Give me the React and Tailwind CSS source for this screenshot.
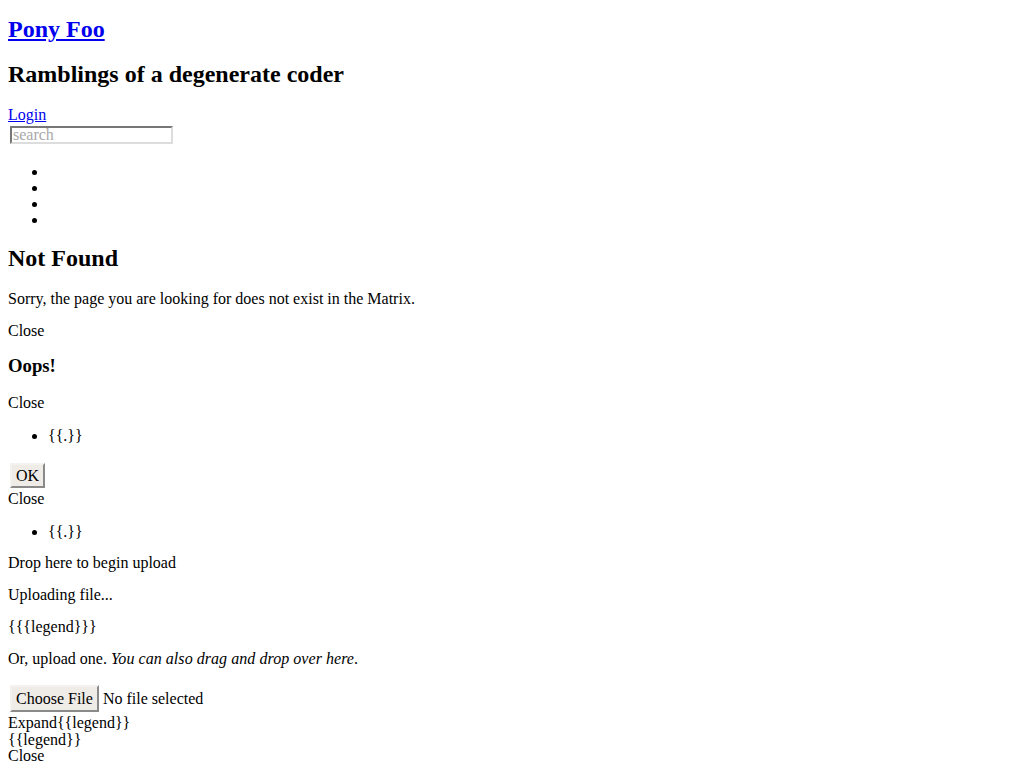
export default function App() {
  const text = "text-[16px] leading-[16px] h-[16px] whitespace-nowrap";
  const link = "text-[#0000ee] underline";
  const btn =
    "ml-[2px] px-[4px] text-[16px] leading-[16px] bg-[#efebe7] border-2 border-t-[#f4f2ef] border-l-[#f4f2ef] border-r-[#8a8a8a] border-b-[#8a8a8a]";
  return (
    <div className="min-h-screen bg-white text-black font-['Liberation_Serif','Times_New_Roman',serif]">
      <div className="flex flex-col items-start pl-[8px]">
        {/* Header */}
        <h1 className="mt-[11px] text-[24px] leading-[37px] h-[37px] font-bold">
          <a href="#" className={link}>Pony Foo</a>
        </h1>
        <h2 className="mt-[12px] text-[24px] leading-[28px] h-[28px] font-bold">
          Ramblings of a degenerate coder
        </h2>
        <a href="#" className={`mt-[19px] ${text} ${link}`}>Login</a>
        <input
          type="text"
          placeholder="search"
          className="mt-[3px] ml-[2px] w-[163px] h-[18px] px-[1px] bg-white text-[16px] leading-[14px] border-2 border-t-[#777] border-l-[#777] border-r-[#ddd] border-b-[#ddd] placeholder:text-[#a9a9a9] outline-none"
        />
        <ul className="mt-[20px] pl-[40px] list-disc">
          <li className="h-[16px] leading-[16px] text-[16px]">&nbsp;</li>
          <li className="h-[16px] leading-[16px] text-[16px]">&nbsp;</li>
          <li className="h-[16px] leading-[16px] text-[16px]">&nbsp;</li>
          <li className="h-[16px] leading-[16px] text-[16px]">&nbsp;</li>
        </ul>

        {/* Not found */}
        <h2 className="mt-[16px] text-[24px] leading-[28px] h-[28px] font-bold">Not Found</h2>
        <p className={`mt-[19px] ${text}`}>
          Sorry, the page you are looking for does not exist in the Matrix.
        </p>
        <div className={`mt-[16px] ${text}`}>Close</div>

        {/* Error dialog */}
        <h3 className="mt-[16px] text-[18.72px] leading-[22px] h-[22px] font-bold">Oops!</h3>
        <div className={`mt-[18px] ${text}`}>Close</div>
        <ul className="mt-[17px] pl-[40px] list-disc">
          <li className={text}>{"{{.}}"}</li>
        </ul>
        <button className={`mt-[19px] h-[25px] ${btn}`}>OK</button>
        <div className={`mt-[3px] ${text}`}>Close</div>
        <ul className="mt-[17px] pl-[40px] list-disc">
          <li className={text}>{"{{.}}"}</li>
        </ul>

        {/* Upload */}
        <p className={`mt-[15px] ${text}`}>Drop here to begin upload</p>
        <p className={`mt-[16px] ${text}`}>Uploading file...</p>
        <p className={`mt-[16px] ${text}`}>{"{{{legend}}}"}</p>
        <p className={`mt-[16px] ${text}`}>
          Or, upload one. <em className="italic tracking-[0.05px]">You can also drag and drop over here</em>.
        </p>
        <div className="mt-[18px] flex items-center">
          <button className={`h-[27px] ${btn}`}>Choose File</button>
          <span className="ml-[4px] text-[16px] leading-[16px] whitespace-nowrap">No file selected</span>
        </div>
        <div className={`mt-[3px] ${text}`}>Expand{"{{legend}}"}</div>
        <div className={`mt-[1px] ${text}`}>{"{{legend}}"}</div>
        <div className={`mt-[0px] ${text}`}>Close</div>
      </div>
    </div>
  );
}
